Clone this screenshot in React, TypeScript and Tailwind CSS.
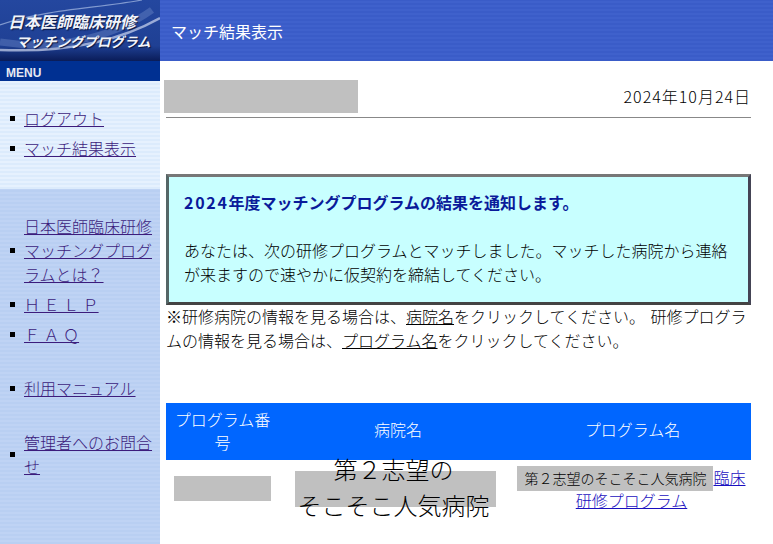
const FONT = "font-['Meiryo','Noto_Sans_CJK_JP','Noto_Sans',sans-serif]";

const menuTop = ['ログアウト', 'マッチ結果表示'];

function MenuItem({ children, className = '' }: { children: React.ReactNode; className?: string }) {
  return (
    <li className={`flex items-center mb-[6px] ${className}`}>
      <span className="w-[5px] h-[5px] bg-black ml-[10px] mr-[9px] shrink-0" />
      <a href="#" className="underline font-light text-[#3c1c7c] w-[130px] leading-[24px]">{children}</a>
    </li>
  );
}

function Logo() {
  return (
    <div className="relative h-[61px] overflow-hidden bg-[#1d3a8a]">
      <svg className="absolute inset-0" width="160" height="61" viewBox="0 0 160 61">
        <defs>
          <linearGradient id="lg" x1="0" y1="0" x2="0" y2="1">
            <stop offset="0" stopColor="#24479f" />
            <stop offset="0.75" stopColor="#1f4094" />
            <stop offset="1" stopColor="#0a1c58" />
          </linearGradient>
        </defs>
        <rect width="160" height="61" fill="url(#lg)" />
        <path d="M0 25 C40 10 100 8 142 0" stroke="#a9bde6" strokeWidth="1.2" fill="none" opacity="0.7" />
        <path d="M0 50 C50 52 110 46 160 18" stroke="#dbe4f7" strokeWidth="2.5" fill="none" opacity="0.65" />
        <path d="M0 42 C50 50 110 40 152 10" stroke="#7e98d2" strokeWidth="7" fill="none" opacity="0.35" />
      </svg>
      <div className="absolute left-[8px] top-[11px] text-[#f2f4fa] font-bold italic text-[16px] leading-[20px] whitespace-nowrap [text-shadow:1px_1px_1px_#081640]">日本医師臨床研修</div>
      <div className="absolute left-[16px] top-[31px] text-[#f2f4fa] font-bold italic text-[13.5px] leading-[20px] whitespace-nowrap [text-shadow:1px_1px_1px_#081640]">マッチングプログラム</div>
    </div>
  );
}

export default function App() {
  return (
    <div className={`flex w-[773px] h-[544px] overflow-hidden bg-white text-[16px] text-black ${FONT}`}>
      {/* サイド */}
      <div className="w-[160px] shrink-0 flex flex-col">
        <Logo />
        <div className="h-[20px] bg-[#003092] text-[#e6e9f2] text-[12px] font-bold leading-[24px] pl-[6px] font-['Liberation_Sans',sans-serif]">MENU</div>
        <div className="h-[108px] pt-[25px] bg-[repeating-linear-gradient(0deg,#dcebfc_0px,#dcebfc_2px,#e6f1fe_2px,#e6f1fe_4px)]">
          <ul>
            {menuTop.map((m) => <MenuItem key={m}>{m}</MenuItem>)}
          </ul>
        </div>
        <div className="flex-1 pt-[25px] bg-[repeating-linear-gradient(0deg,#b9cff2_0px,#b9cff2_2px,#bfd3f4_2px,#bfd3f4_4px)]">
          <ul>
            <MenuItem>日本医師臨床研修マッチングプログラムとは？</MenuItem>
            <MenuItem>Ｈ Ｅ Ｌ Ｐ</MenuItem>
            <MenuItem className="mb-[30px]">Ｆ Ａ Ｑ</MenuItem>
            <MenuItem className="mb-[30px]">利用マニュアル</MenuItem>
            <MenuItem>管理者へのお問合せ</MenuItem>
          </ul>
        </div>
      </div>

      {/* 本文 */}
      <div className="flex-1 min-w-0 font-light">
        <div className="h-[61px] bg-[repeating-linear-gradient(0deg,#3a5cc8_0px,#3a5cc8_2px,#3f61cc_2px,#3f61cc_4px)] text-white font-normal flex items-center pl-[11px] text-[16px]">マッチ結果表示</div>

        <div className="pl-[6px] pr-[22px]">
          <div className="flex items-center justify-between h-[57px] border-b border-[#888] pt-[15px]">
            <div className="w-[194px] h-[33px] bg-[#c0c0c0] -ml-[2px]" />
            <div className="tracking-[1px] -mt-[1px]">2024年10月24日</div>
          </div>

          <div className="mt-[56px] h-[131px] border-[3px] border-t-[#777] border-l-[#566] border-r-[#445] border-b-[#444] bg-[#c8ffff] pl-[15px] pr-[15px] pt-[13px] leading-[24px]">
            <div className="font-bold text-[#0a1a9a]"><span className="tracking-[1.7px]">2024</span>年度マッチングプログラムの結果を通知します。</div>
            <div className="mt-[24px]">あなたは、次の研修プログラムとマッチしました。マッチした病院から連絡が来ますので速やかに仮契約を締結してください。</div>
          </div>

          <p className="leading-[24px] mt-[-1px]">
            ※研修病院の情報を見る場合は、<span className="underline">病院名</span>をクリックしてください。 <span className="inline-block w-[2px]" />研修プログラムの情報を見る場合は、<span className="underline">プログラム名</span>をクリックしてください。
          </p>

          <div className="mt-[51px] grid grid-cols-[113px_238px_234px] bg-[#0066ff] text-white text-center h-[57px] items-center leading-[23px]">
            <div className="px-[8px] -mt-[1px]">プログラム番号</div>
            <div className="-mt-[5px]">病院名</div>
            <div className="-mt-[5px] pr-[3px]">プログラム名</div>
          </div>

          <div className="grid grid-cols-[113px_238px_234px] text-center">
            <div className="pt-[16px] pl-[8px]"><div className="w-[97px] h-[25px] bg-[#c0c0c0]" /></div>
            <div className="relative text-[24px] leading-[36px] -mt-[9px] pr-[9px]">
              <div className="absolute left-[16px] top-[20px] w-[201px] h-[36px] bg-[#c0c0c0]" />
              <div className="relative">第２志望の<br />そこそこ人気病院</div>
            </div>
            <div className="pt-[6px] leading-[23px] pr-[5px]">
              <span className="inline-block w-[196px] h-[25px] -mb-[4px] bg-[#c0c0c0] text-[14px] leading-[25px] align-top">第２志望のそこそこ人気病院</span>
              <a href="#" className="underline text-[#1a10c0]">臨床研修プログラム</a>
            </div>
          </div>
        </div>
      </div>
    </div>
  );
}
